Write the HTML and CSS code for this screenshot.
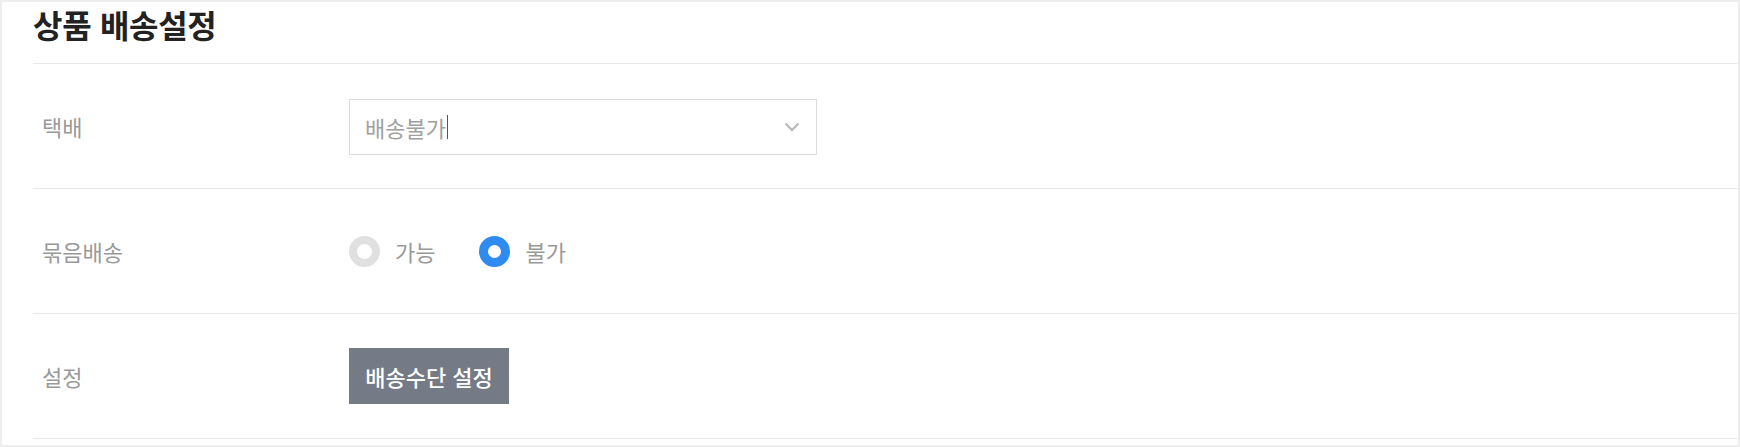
FILE: index.html
```html
<!DOCTYPE html>
<html lang="ko">
<head>
<meta charset="utf-8">
<title>상품 배송설정</title>
<link rel="stylesheet" href="styles.css">
</head>
<body>
<div class="card">
  <div class="head"><h2 class="title">상품 배송설정</h2></div>
  <div class="row">
    <div class="label">택배</div>
    <div class="field">
      <div class="select">
        <span class="select-text">배송불가<span class="caret"></span></span>
        <svg class="chev" width="16" height="10" viewBox="0 0 16 10"><path d="M1.5 1.5 L8 8 L14.5 1.5" fill="none" stroke="#b5b5b5" stroke-width="2"/></svg>
      </div>
    </div>
  </div>
  <div class="row">
    <div class="label">묶음배송</div>
    <div class="field radios">
      <label class="radio"><span class="dot off"></span><span class="rtext">가능</span></label>
      <label class="radio"><span class="dot on"></span><span class="rtext">불가</span></label>
    </div>
  </div>
  <div class="row">
    <div class="label">설정</div>
    <div class="field">
      <button class="btn">배송수단 설정</button>
    </div>
  </div>
</div>
</body>
</html>
```

FILE: styles.css
```css
html, body {
  margin: 0;
  padding: 0;
}
body {
  background: #eeeeee;
  padding: 2px;
  font-family: "Noto Sans CJK KR", "Noto Sans", sans-serif;
  width: 1736px;
  height: 443px;
  overflow: hidden;
}
.card {
  background: #ffffff;
  height: 443px;
  padding-left: 31px;
  box-sizing: border-box;
}
.head {
  height: 62px;
  border-bottom: 1px solid #e9e9e9;
  box-sizing: border-box;
  display: flex;
  align-items: flex-start;
}
.title {
  margin: 0;
  padding-top: 1px;
  font-size: 32px;
  font-weight: 700;
  color: #222;
  line-height: 42px;
  letter-spacing: -0.3px;
}
.row {
  height: 125px;
  border-bottom: 1px solid #e9e9e9;
  box-sizing: border-box;
  display: flex;
  align-items: center;
}
.label {
  width: 316px;
  padding-left: 9px;
  box-sizing: border-box;
  font-size: 22px;
  color: #999;
  flex: none;
}
.field {
  display: flex;
  align-items: center;
}
.select {
  width: 468px;
  height: 56px;
  border: 1px solid #dcdcdc;
  box-sizing: border-box;
  display: flex;
  align-items: center;
  justify-content: space-between;
  padding: 0 16px 0 15px;
  margin-top: 2px;
}
.select-text {
  font-size: 22px;
  color: #a0a0a0;
  display: flex;
  align-items: center;
}
.caret {
  display: inline-block;
  width: 1px;
  height: 24px;
  background: #555;
  margin-left: 1px;
}
.radios {
  gap: 0;
}
.radio {
  display: flex;
  align-items: center;
  margin-right: 44px;
}
.dot {
  width: 31px;
  height: 31px;
  border-radius: 50%;
  box-sizing: border-box;
  display: inline-block;
}
.dot.off {
  border: 8px solid #e0e0e0;
  background: #fff;
}
.dot.on {
  border: 9px solid #2f8bee;
  background: #fff;
}
.rtext {
  font-size: 22px;
  color: #999;
  margin-left: 15px;
}
.btn {
  width: 160px;
  height: 56px;
  border: none;
  background: #747a86;
  color: #fff;
  font-family: "Noto Sans CJK KR", "Noto Sans", sans-serif;
  font-size: 22px;
  font-weight: 500;
  padding: 0;
  margin: 0;
}
```
